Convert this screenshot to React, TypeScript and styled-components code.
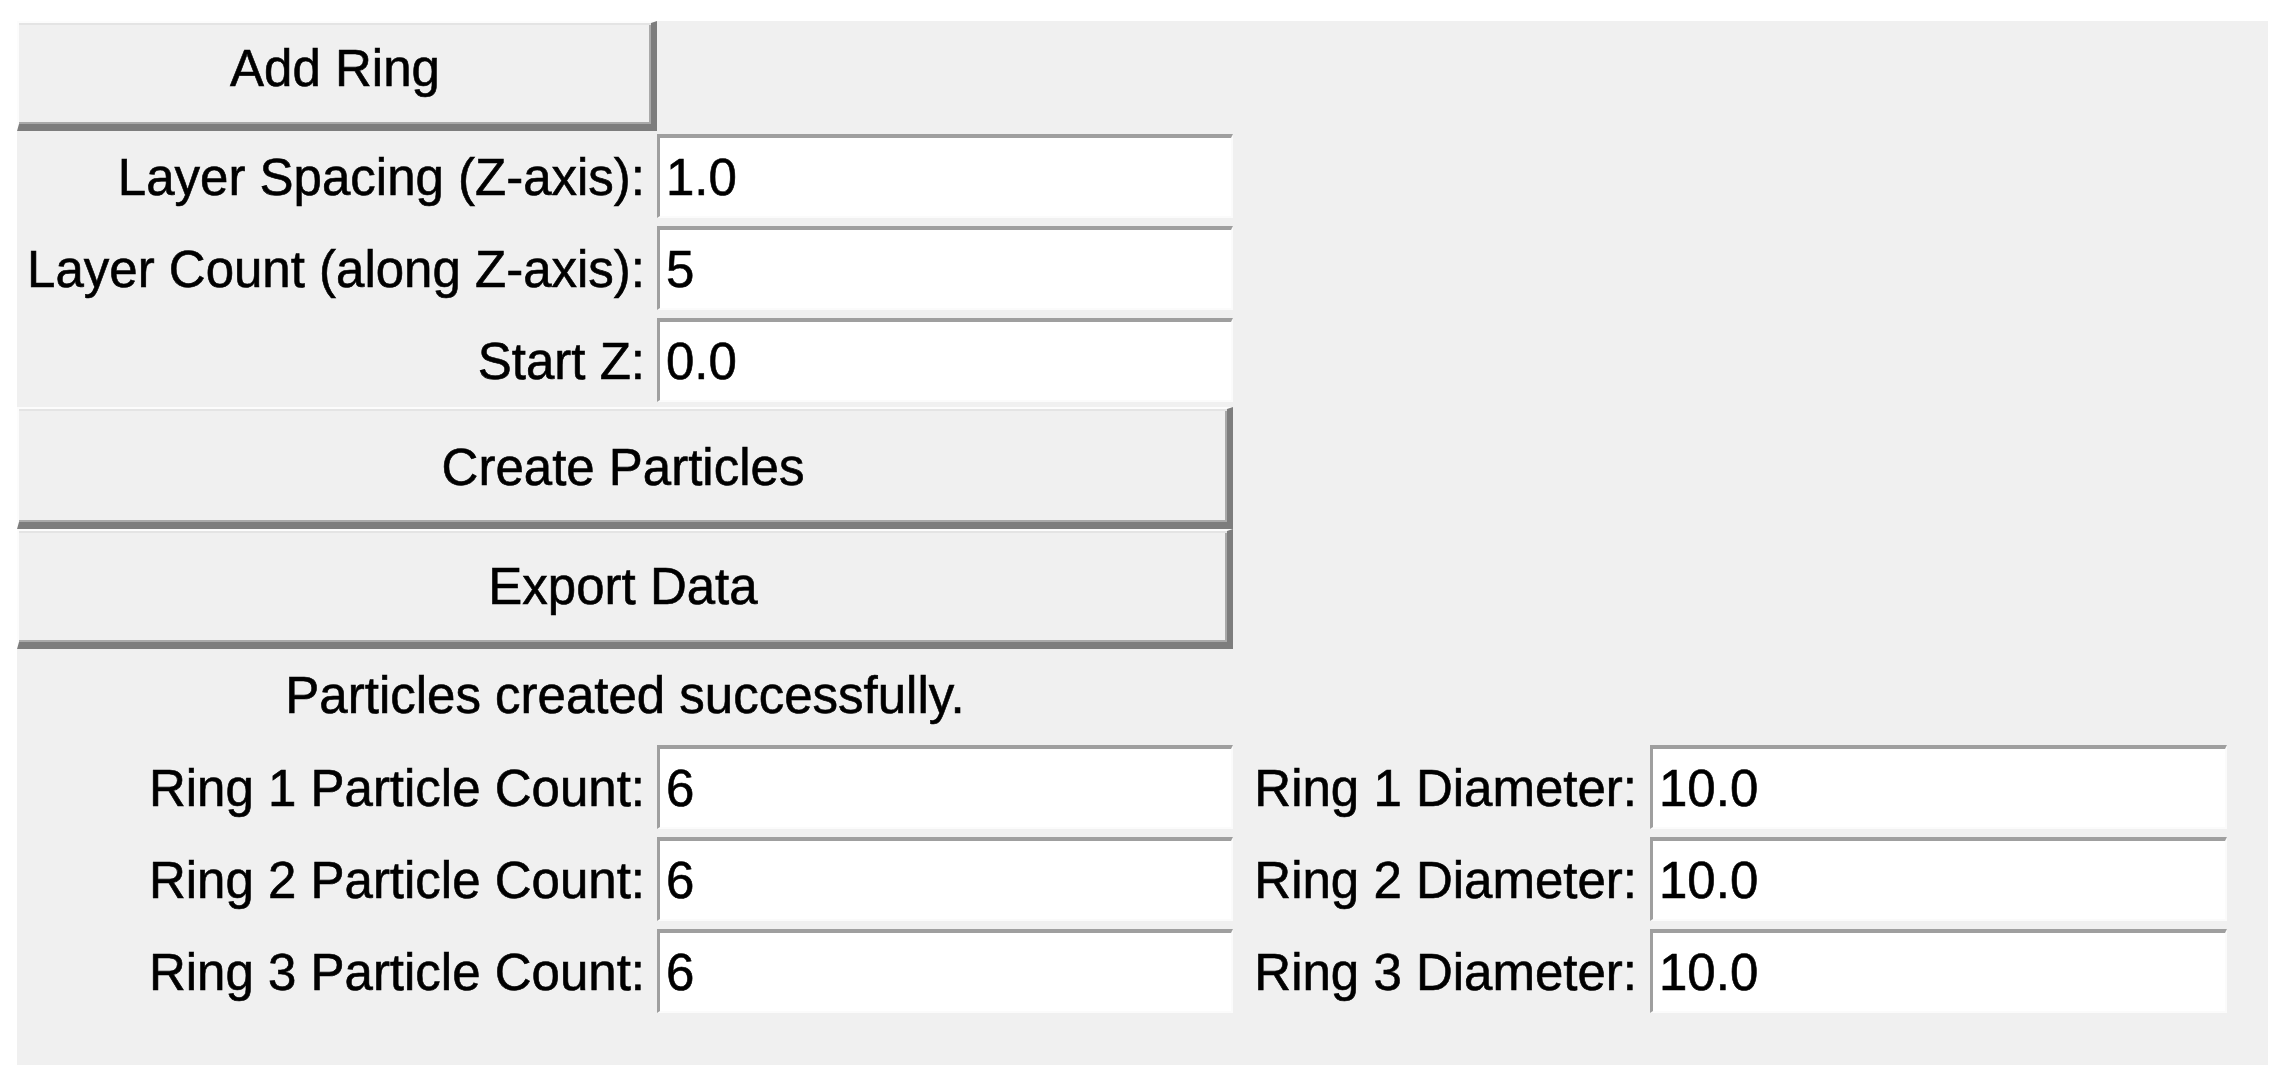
import React from 'react';
import styled, { createGlobalStyle } from 'styled-components';

const GlobalStyle = createGlobalStyle`
  html, body {
    margin: 0;
    padding: 0;
    background: #ffffff;
  }
  * {
    box-sizing: border-box;
  }
`;

const Page = styled.div`
  padding: 21px 0 0 17px;
`;

// the Tk root window, grid-managed like the original
const Window = styled.div`
  width: 2251px;
  height: 1044px;
  background: #f0f0f0;
  display: grid;
  grid-template-columns: 640px 576px 417px 577px;
  grid-template-rows: 110px 92px 92px 92px 122px 120px 93px 92px 92px 92px;
  align-content: start;
  font-family: 'Liberation Sans', Arial, sans-serif;
  font-size: 51px;
  color: #000;
  -webkit-text-stroke: 0.6px #000;
`;

const TkButton = styled.button<{ $span: number; $padTop?: number; $padBottom?: number }>`
  grid-column: span ${({ $span }) => $span};
  display: flex;
  align-items: center;
  justify-content: center;
  margin: 0;
  padding: ${({ $padTop = 0 }) => $padTop}px 0 ${({ $padBottom = 0 }) => $padBottom}px;
  background: #f0f0f0;
  font: inherit;
  color: #000;
  -webkit-text-stroke: inherit;
  border-top: 2px solid #fcfcfc;
  border-left: 2px solid #fcfcfc;
  border-right: 6px solid #7d7d7d;
  border-bottom: 7px solid #7d7d7d;
  box-shadow: inset 0 2px 0 #e4e4e4, inset -2px -2px 0 #a9a9a9;
  cursor: pointer;
`;

const Spacer = styled.div<{ $span: number }>`
  grid-column: span ${({ $span }) => $span};
`;

const FieldLabel = styled.label<{ $padRight: number }>`
  display: flex;
  align-items: center;
  justify-content: flex-end;
  padding-right: ${({ $padRight }) => $padRight}px;
  white-space: nowrap;
`;

const EntryCell = styled.div`
  padding-top: 3px;
`;

const Entry = styled.input`
  display: block;
  width: 100%;
  height: 84px;
  margin: 0;
  padding: 0 0 0 6px;
  background: #ffffff;
  border-top: 4px solid #9f9f9f;
  border-left: 3px solid #9f9f9f;
  border-right: 2px solid #fbfbfb;
  border-bottom: 2px solid #fbfbfb;
  font: inherit;
  color: #000;
  -webkit-text-stroke: inherit;
  outline: none;
`;

const Status = styled.div`
  grid-column: span 2;
  display: flex;
  align-items: center;
  justify-content: center;
`;

type Field = { label: string; value: string };

const layerFields: Field[] = [
  { label: 'Layer Spacing (Z-axis):', value: '1.0' },
  { label: 'Layer Count (along Z-axis):', value: '5' },
  { label: 'Start Z:', value: '0.0' },
];

const rings = [
  { count: '6', diameter: '10.0' },
  { count: '6', diameter: '10.0' },
  { count: '6', diameter: '10.0' },
];

export default function App() {
  return (
    <>
      <GlobalStyle />
      <Page>
        <Window>
          <TkButton $span={1} $padBottom={11}>Add Ring</TkButton>
          <Spacer $span={3} />

          {layerFields.map((f) => (
            <React.Fragment key={f.label}>
              <FieldLabel $padRight={12}>{f.label}</FieldLabel>
              <EntryCell>
                <Entry defaultValue={f.value} />
              </EntryCell>
              <Spacer $span={2} />
            </React.Fragment>
          ))}

          <TkButton $span={2} $padTop={4}>Create Particles</TkButton>
          <Spacer $span={2} />
          <TkButton $span={2}>Export Data</TkButton>
          <Spacer $span={2} />

          <Status>Particles created successfully.</Status>
          <Spacer $span={2} />

          {rings.map((r, i) => (
            <React.Fragment key={i}>
              <FieldLabel $padRight={12}>Ring {i + 1} Particle Count:</FieldLabel>
              <EntryCell>
                <Entry defaultValue={r.count} />
              </EntryCell>
              <FieldLabel $padRight={13}>Ring {i + 1} Diameter:</FieldLabel>
              <EntryCell>
                <Entry defaultValue={r.diameter} />
              </EntryCell>
            </React.Fragment>
          ))}
        </Window>
      </Page>
    </>
  );
}
